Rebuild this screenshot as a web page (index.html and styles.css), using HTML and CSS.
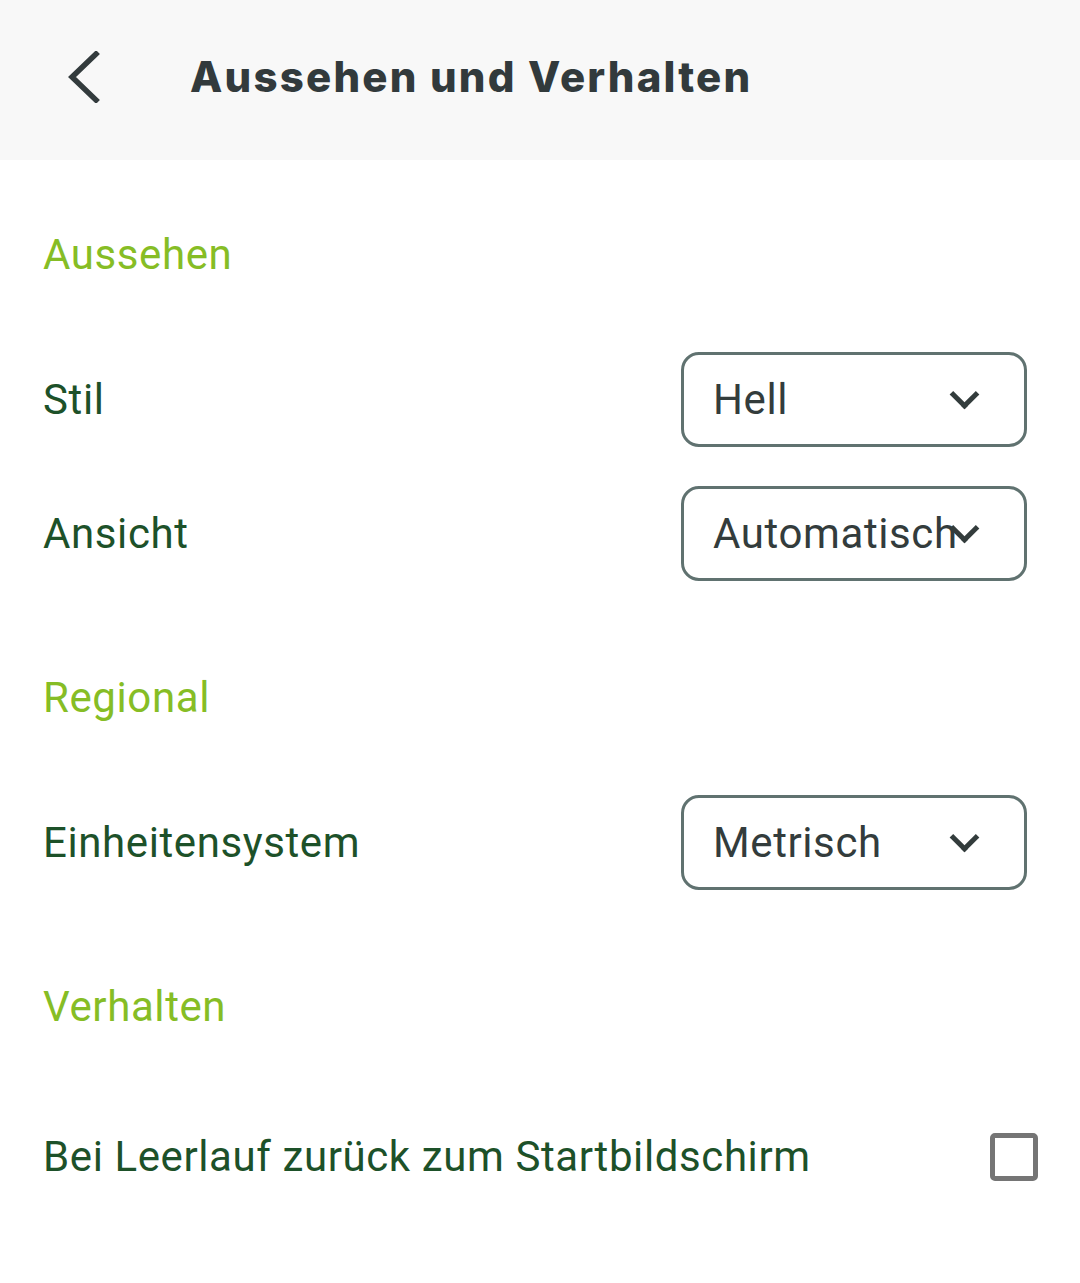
FILE: index.html
```html
<!DOCTYPE html>
<html lang="de">
<head>
  <meta charset="UTF-8">
  <title>Aussehen und Verhalten</title>
  <link rel="stylesheet" href="styles.css">
</head>
<body>
  <!-- Kopfzeile -->
  <header class="topbar">
    <button class="back" aria-label="Zurück">
      <svg width="34" height="52" viewBox="0 0 34 52">
        <path d="M30 3 L6 26 L30 49" fill="none" stroke="#333b3d" stroke-width="5.5" stroke-linecap="square"/>
      </svg>
    </button>
    <h1 class="title">Aussehen und Verhalten</h1>
  </header>

  <main class="content">
    <!-- Aussehen -->
    <section class="section">
      <h2 class="section-title">Aussehen</h2>
      <div class="row">
        <span class="label">Stil</span>
        <div class="select"><span>Hell</span><i class="chev"></i></div>
      </div>
      <div class="row">
        <span class="label">Ansicht</span>
        <div class="select"><span>Automatisch</span><i class="chev"></i></div>
      </div>
    </section>

    <!-- Regional -->
    <section class="section">
      <h2 class="section-title">Regional</h2>
      <div class="row">
        <span class="label">Einheitensystem</span>
        <div class="select"><span>Metrisch</span><i class="chev"></i></div>
      </div>
    </section>

    <!-- Verhalten -->
    <section class="section">
      <h2 class="section-title title-check">Verhalten</h2>
      <div class="row">
        <span class="label">Bei Leerlauf zurück zum Startbildschirm</span>
        <span class="checkbox"></span>
      </div>
    </section>
  </main>
</body>
</html>
```

FILE: styles.css
```css
html, body{
  margin: 0;
  padding: 0;
}

body{
  background-color: #fff;
  font-family: "Roboto", "Liberation Sans", sans-serif;
  letter-spacing: 0.6px;
}

/* Kopfzeile */
.topbar{
  display: flex;
  align-items: center;
  height: 160px;
  background-color: #f8f8f8;
}
.back{
  display: flex;
  width: 34px;
  height: 52px;
  margin: 0 0 6px 66px;
  padding: 0;
  border: none;
  background: transparent;
  cursor: pointer;
}
.title{
  margin: 0 0 8px 90px;
  font-family: "Inter", sans-serif;
  font-size: 42px;
  font-weight: 800;
  color: #323a3c;
  letter-spacing: 2.2px;
}

/* Inhalt */
.content{
  padding: 0 53px 0 43px;
}
.section{
  margin-top: 93px;
}
.section:first-child{
  margin-top: 71px;
}
.section-title{
  margin: 0 0 73px;
  height: 48px;
  line-height: 48px;
  font-size: 42px;
  font-weight: 400;
  color: #86bd25;
}
.title-check{
  margin-bottom: 78px;
}

.row{
  display: flex;
  align-items: center;
  justify-content: space-between;
  height: 95px;
}
.row + .row{
  margin-top: 39px;
}
.label{
  font-size: 42px;
  color: #1d5129;
}

/* Auswahlfeld */
.select{
  position: relative;
  box-sizing: border-box;
  width: 346px;
  height: 95px;
  padding-left: 29px;
  border: 3px solid #607270;
  border-radius: 18px;
  display: flex;
  align-items: center;
  font-size: 42px;
  color: #333c3c;
}
.chev{
  position: absolute;
  right: 49px;
  top: 29px;
  width: 16px;
  height: 16px;
  border-right: 5px solid #333c3c;
  border-bottom: 5px solid #333c3c;
  transform: rotate(45deg);
}

/* Checkbox */
.checkbox{
  box-sizing: border-box;
  width: 48px;
  height: 48px;
  margin-right: -11px;
  border: 5px solid #757575;
  border-radius: 5px;
}
```
